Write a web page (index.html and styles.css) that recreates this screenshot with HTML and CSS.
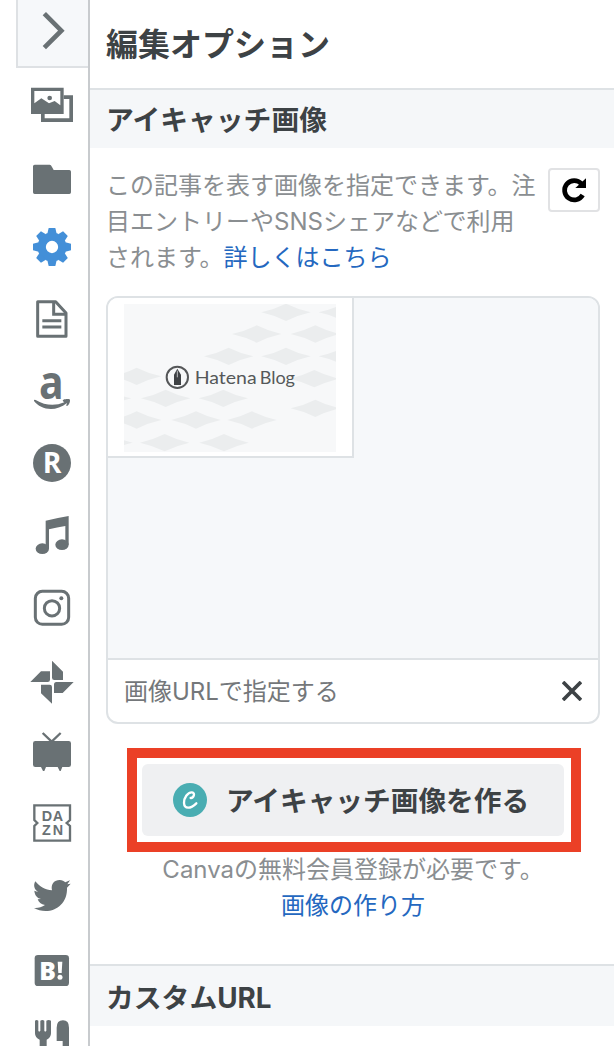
FILE: index.html
```html
<!DOCTYPE html>
<html lang="ja">
<head>
<meta charset="utf-8">
<title>編集オプション</title>
<link rel="stylesheet" href="styles.css">
</head>
<body>
<div class="app">
  <nav class="rail">
    <button class="rail-toggle" aria-label="閉じる">
      <svg viewBox="54 0 210 198"><path d="M133 41 184 92 133 143" fill="none" stroke="currentColor" stroke-width="14"/></svg>
    </button>
    <a class="rail-item"><svg viewBox="48 201 216 216"><path fill-rule="evenodd" d="M93 263h98v79H93zM103 273v37l21-15 23 15 17-7 17 13v-43z"/><circle cx="149" cy="294" r="7"/><path d="M191 286h28v80h-96v-24h11v13h74v-58h-17z"/></svg></a>
    <a class="rail-item"><svg viewBox="48 417 216 216"><path d="M104 494h45c4 0 5 3 7 7l5 9h47q5 0 5 5v62q0 5-5 5H104q-5 0-5-5v-78q0-5 5-5z"/></svg></a>
    <a class="rail-item is-active"><svg viewBox="48 3 216 216"><g transform="translate(156 111)"><circle r="31" fill="none" stroke="currentColor" stroke-width="25"/><g id="teeth"><path id="tooth" d="M-14-40-10-57H10L14-40z"/><use href="#tooth" transform="rotate(45)"/><use href="#tooth" transform="rotate(90)"/><use href="#tooth" transform="rotate(135)"/></g><use href="#teeth" transform="rotate(180)"/></g></svg></a>
    <a class="rail-item"><svg viewBox="48 219 216 216"><g fill="none" stroke="currentColor" stroke-width="9" stroke-linejoin="round"><path d="M113 275h54l31 34v70h-85z"/><path d="M161 275v38h37M127 332h57M127 351h57" stroke-linejoin="miter"/></g></svg></a>
    <a class="rail-item"><svg viewBox="48 435 216 216"><text class="amazon-a" x="117" y="566" textLength="74" lengthAdjust="spacingAndGlyphs">a</text><path d="M102 573q-1-5 5-3 43 25 86 7l-4-3c-4-5 10-8 20-6 3 5-1 17-8 20-4 1-1-5 0-9-36 29-79 20-99-6z"/></svg></a>
    <a class="rail-item"><svg viewBox="48 21 216 216"><circle cx="156" cy="129" r="57"/><text class="rakuten-r" x="128" y="160" textLength="56" lengthAdjust="spacingAndGlyphs">R</text></svg></a>
    <a class="rail-item"><svg viewBox="48 237 216 216"><path d="M137 302q34-8 69-14v86h-10v-56q-25 4-49 10v58h-10z"/><ellipse cx="127" cy="386" rx="20" ry="16"/><ellipse cx="186" cy="374" rx="20" ry="16"/></svg></a>
    <a class="rail-item"><svg viewBox="48 453 216 216"><g fill="none" stroke="currentColor" stroke-width="9"><rect x="106" y="514" width="100" height="99" rx="21"/><circle cx="156" cy="565" r="23"/></g><circle cx="184" cy="535" r="6"/></svg></a>
    <a class="rail-item"><svg viewBox="48 9 216 216"><path d="M156 62 189 95v25h-26q-7 0-7-7zM91 126l32-32h27v25q0 7-7 7zM221 126l-33 33h-26v-25q0-8 7-8zM156 191l-33-31v-26h26q7 0 7 7z"/></svg></a>
    <a class="rail-item"><svg viewBox="48 225 216 216"><path d="M128 279l27 26 27-26" fill="none" stroke="currentColor" stroke-width="7"/><path d="M106 303h100q7 0 7 7v64q0 7-7 7h-19l-5 12h-3l-6-12h-35l-5 12h-4l-6-12h-17q-7 0-7-7v-64q0-7 7-7z"/></svg></a>
    <a class="rail-item"><svg viewBox="48 441 216 216"><path d="M103 540v-44h107v44l-10 9 10 9v44H103v-44l9-9z" fill="none" stroke="currentColor" stroke-width="7"/><text class="dazn" x="125" y="543" textLength="64" lengthAdjust="spacing">DA</text><text class="dazn" x="126" y="586" textLength="63" lengthAdjust="spacing">ZN</text></svg></a>
    <a class="rail-item"><svg viewBox="48 27 216 216"><path d="M106 94c14 17 30 26 50 27-4-19 7-31 23-31 8 0 13 3 17 7l14-6-8 12 10-2-11 12c2 43-29 70-64 70-13 0-25-3-35-9 12 1 23-2 33-9-12-1-19-8-22-17l10-1c-13-3-19-13-20-25l11 4c-11-8-15-20-8-32z"/></svg></a>
    <a class="rail-item"><svg viewBox="48 243 216 216"><rect x="104" y="315" width="103" height="93" rx="10"/><text class="hatebu" x="118" y="389" textLength="50" lengthAdjust="spacingAndGlyphs">B</text><path d="M173 335h14l-2 34h-10z" fill="#fff"/><circle cx="180" cy="382" r="7.5" fill="#fff"/></svg></a>
    <a class="rail-item"><svg viewBox="48 459 216 216"><path d="M105 512q5-4 10 0v30q3 5 6 0v-30q6-4 12 0v30q3 5 6 0v-30q7-4 14 0v38q0 13-13 19v45h-21v-45q-14-6-14-19zM170 533q0-22 19-22 18 0 18 22v80h-19v-40h-18z"/></svg></a>
  </nav>

  <main class="panel">
    <h1 class="panel-title">編集オプション</h1>

    <section>
      <h2 class="section-title">アイキャッチ画像</h2>
      <div class="section-body">
        <div class="intro">
          <p class="description">この記事を表す画像を指定できます。注<br>目エントリーやSNSシェアなどで利用<br>されます。<a class="link">詳しくはこちら</a></p>
          <button class="reload" aria-label="更新"><svg viewBox="588 54 156 132"><path d="M692 135A29 29 0 1 1 688 101" fill="none" stroke="currentColor" stroke-width="14"/><path d="M702 85v29h-32z"/></svg></button>
        </div>

        <div class="picker">
          <div class="picker-list">
            <div class="thumb">
              <svg viewBox="72 42 636 444">
                <rect x="72" y="42" width="636" height="444" fill="#f7f8f9"/>
                <defs><path id="tile" d="M-74 0Q-34-9 0-26 34-9 74 0 34 9 0 26-34 9-74 0z"/></defs>
                <g fill="#ebedee">
                  <use href="#tile" x="558" y="67"/><use href="#tile" x="730" y="67"/>
                  <use href="#tile" x="470" y="132"/><use href="#tile" x="646" y="132"/>
                  <use href="#tile" x="386" y="199"/><use href="#tile" x="558" y="199"/><use href="#tile" x="730" y="199"/>
                  <use href="#tile" x="110" y="259"/><use href="#tile" x="643" y="266"/>
                  <use href="#tile" x="20" y="325"/><use href="#tile" x="197" y="325"/><use href="#tile" x="370" y="325"/><use href="#tile" x="646" y="355"/>
                  <use href="#tile" x="110" y="390"/><use href="#tile" x="288" y="390"/><use href="#tile" x="456" y="390"/>
                  <use href="#tile" x="24" y="458"/><use href="#tile" x="194" y="458"/><use href="#tile" x="372" y="458"/>
                </g>
                <circle cx="232" cy="262" r="32" fill="#f7f8f9" stroke="#555759" stroke-width="6"/>
                <path d="M222 285v-31l10-18 11 18v31z" fill="#3f4245"/><path d="M232 242v20" stroke="#f7f8f9" stroke-width="2"/>
                <text class="brand" x="284" y="283" textLength="186" lengthAdjust="spacingAndGlyphs">Hatena</text>
                <text class="brand" x="479" y="283" textLength="106" lengthAdjust="spacingAndGlyphs">Blog</text>
              </svg>
            </div>
          </div>
          <div class="picker-url">
            <span>画像URLで指定する</span>
            <svg class="clear" viewBox="0 0 20 20"><path d="M1 1 19 19M19 1 1 19" fill="none" stroke="currentColor" stroke-width="3.7"/></svg>
          </div>
        </div>

        <div class="highlight">
          <button class="create">
            <svg class="canva" viewBox="249 429 102 102"><circle cx="300" cy="480" r="51" fill="#49adb2"/><path d="M302 474c9 1 15-16 4-17-13-1-25 18-24 32 1 19 20 18 37 1" fill="none" stroke="#fff" stroke-width="7" stroke-linecap="round"/></svg>
            <span>アイキャッチ画像を作る</span>
          </button>
        </div>
        <p class="note">Canvaの無料会員登録が必要です。<br><a class="link">画像の作り方</a></p>
      </div>
    </section>

    <section>
      <h2 class="section-title is-last">カスタムURL</h2>
    </section>
  </main>
</div>
</body>
</html>
```

FILE: styles.css
```css
* { box-sizing: border-box; }

body {
  margin: 0;
  background: #fff;
  color: #3d4245;
  font-family: Inter, "Noto Sans CJK JP", sans-serif;
}

h1, h2, p { margin: 0; }

button {
  margin: 0;
  padding: 0;
  font: inherit;
  color: inherit;
}

svg { display: block; fill: currentColor; }

.app {
  display: flex;
  height: 1046px;
  overflow: hidden;
}

.rail {
  flex: 0 0 90px;
  padding-left: 16px;
  border-right: 2px solid #c8cbce;
  color: #697174;
}

.rail-toggle {
  display: block;
  width: 72px;
  height: 68px;
  margin-bottom: -1px;
  border: solid #dee1e4;
  border-width: 0 0 2px 2px;
  background: #f6f8fa;
}

.rail-toggle svg { width: 70px; height: 66px; }

.rail-item { display: block; height: 72px; }
.rail-item svg { width: 72px; height: 72px; overflow: visible; }
.rail-item.is-active { color: #438fd8; }

.amazon-a, .rakuten-r, .dazn, .hatebu { font-family: "Open Sans", sans-serif; font-weight: 700; }
.amazon-a { font-size: 140px; }
.rakuten-r { font-size: 86px; fill: #fff; }
.dazn { font-family: "Liberation Sans", sans-serif; font-size: 43px; }
.hatebu { font-size: 75px; font-weight: 800; fill: #fff; }

.panel { flex: 1; min-width: 0; }

.panel-title {
  height: 88px;
  padding-left: 16px;
  font-size: 32px;
  line-height: 89px;
}

.section-title {
  height: 60px;
  padding-left: 16px;
  border-top: 2px solid #dee2e5;
  background: #f5f7f9;
  font-size: 27.8px;
  line-height: 60px;
}

.section-title.is-last {
  height: 62px;
  line-height: 64px;
}

.section-body {
  height: 816px;
  padding: 20px 14px 0 16px;
}

.intro {
  display: flex;
  justify-content: space-between;
  height: 128px;
}

.description, .note {
  color: #8a8e91;
  font-size: 24px;
  line-height: 36px;
  white-space: nowrap;
}

.link { color: #2468c0; }

.reload {
  width: 52px;
  height: 44px;
  border: 2px solid #e1e2e4;
  border-radius: 4px;
  background: #fff;
  color: #000;
}

.reload svg { width: 52px; height: 44px; margin: -2px; }

.picker {
  height: 428px;
  border: 2px solid #dee2e5;
  border-radius: 12px;
  overflow: hidden;
}

.picker-list { height: 360px; background: #f6f8fa; }

.thumb {
  width: 246px;
  height: 160px;
  padding: 6px 16px;
  border: solid #dee2e5;
  border-width: 0 2px 2px 0;
  background: #fff;
}

.thumb svg { width: 212px; height: 148px; }
.brand { font-family: Lato, sans-serif; font-size: 51px; fill: #55585a; }

.picker-url {
  display: flex;
  align-items: center;
  justify-content: space-between;
  height: 64px;
  padding: 0 16px;
  border-top: 2px solid #dee2e5;
  color: #74777a;
  font-size: 24px;
}

.picker-url span { padding-bottom: 3px; }

.clear { width: 20px; height: 20px; color: #3d4245; }

.highlight {
  width: 454px;
  height: 104px;
  margin: 24px 0 0 21px;
  padding: 6px 7px 6px 5px;
  border: 10px solid #eb4026;
}

.create {
  display: flex;
  align-items: center;
  gap: 19px;
  width: 422px;
  height: 72px;
  padding-left: 31px;
  border: 0;
  border-radius: 6px;
  background: #eff0f2;
  font-size: 27.7px;
  font-weight: 700;
  white-space: nowrap;
}

.create span { padding-bottom: 3px; }

.canva { flex: none; width: 34px; height: 34px; }

.note { text-align: center; }
```
